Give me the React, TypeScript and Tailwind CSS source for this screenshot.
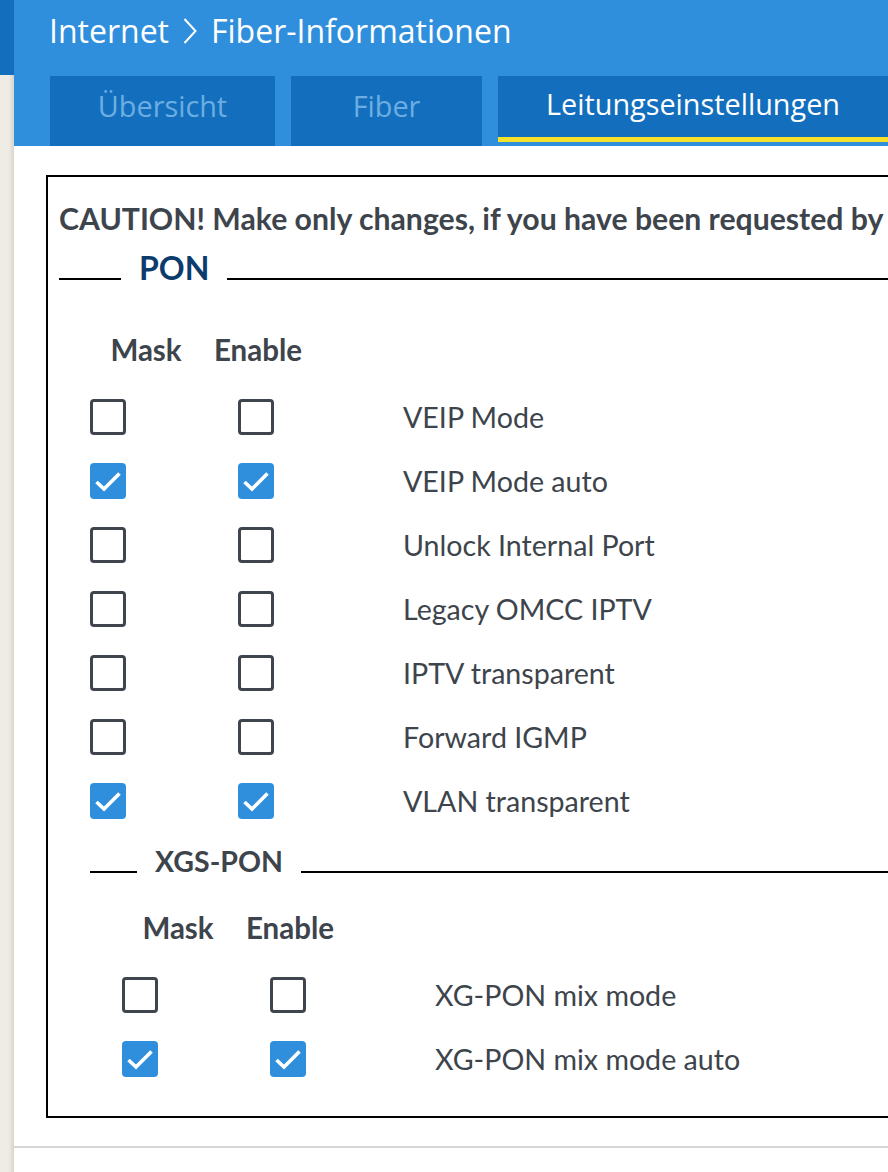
import React from "react";

type Opt = { label: string; mask: boolean; enable: boolean };

const ponOptions: Opt[] = [
  { label: "VEIP Mode", mask: false, enable: false },
  { label: "VEIP Mode auto", mask: true, enable: true },
  { label: "Unlock Internal Port", mask: false, enable: false },
  { label: "Legacy OMCC IPTV", mask: false, enable: false },
  { label: "IPTV transparent", mask: false, enable: false },
  { label: "Forward IGMP", mask: false, enable: false },
  { label: "VLAN transparent", mask: true, enable: true },
];

const xgsOptions: Opt[] = [
  { label: "XG-PON mix mode", mask: false, enable: false },
  { label: "XG-PON mix mode auto", mask: true, enable: true },
];

function Box({ checked }: { checked: boolean }) {
  if (checked) {
    return (
      <span className="flex h-[36px] w-[36px] shrink-0 items-center justify-center rounded-[4px] bg-[#2f8fdc]">
        <svg width="36" height="36" viewBox="0 0 36 36" fill="none">
          <polyline points="6.5,19 14,26 29.5,10.5" stroke="#fff" strokeWidth="3.6" />
        </svg>
      </span>
    );
  }
  return <span className="block h-[36px] w-[36px] shrink-0 rounded-[4px] border-[3px] border-[#3e454c] bg-white" />;
}

function Legend({ text, lead, className }: { text: string; lead: number; className: string }) {
  return (
    <div className="flex h-[32px] items-center">
      <div className="h-[2px] shrink-0 translate-y-[11px] bg-black" style={{ width: lead }} />
      <span className={`px-[18px] font-bold leading-none ${className}`}>{text}</span>
      <div className="h-[2px] flex-1 translate-y-[11px] bg-black" />
    </div>
  );
}

function Heads() {
  return (
    <div className="flex h-[64px] items-center text-[29.5px] font-bold text-[#3d444b]">
      <span className="ml-[48px] w-[100px] text-center">Mask</span>
      <span className="ml-[2px] w-[120px] text-center">Enable</span>
    </div>
  );
}

function Rows({ items }: { items: Opt[] }) {
  return (
    <div className="flex flex-col">
      {items.map((o) => (
        <div key={o.label} className="flex h-[64px] items-center">
          <span className="ml-[42px]">
            <Box checked={o.mask} />
          </span>
          <span className="ml-[112px]">
            <Box checked={o.enable} />
          </span>
          <span className="ml-[129px] whitespace-nowrap text-[28.6px] text-[#3d444b]">{o.label}</span>
        </div>
      ))}
    </div>
  );
}

export default function App() {
  return (
    <div className="flex h-[1172px] w-[888px] overflow-hidden bg-white font-['Lato',sans-serif]">
      <div className="flex w-[14px] shrink-0 flex-col">
        <div className="h-[75px] bg-[#136fbd]" />
        <div className="flex-1 bg-gradient-to-r from-[#efece6] from-60% to-[#d9d5cd]" />
      </div>

      <div className="flex min-w-0 flex-1 flex-col">
        <header className="flex h-[146px] flex-col bg-[#2f8fdc] font-['Open_Sans',sans-serif]">
          <div className="flex h-[76px] items-center pb-[14px] pl-[35px] text-[32px] text-white">
            <span>Internet</span>
            <svg className="mx-[14px]" width="14" height="26" viewBox="0 0 14 26" fill="none">
              <polyline points="1.5,1 12.5,13 1.5,25" stroke="#fff" strokeWidth="2" />
            </svg>
            <span>Fiber-Informationen</span>
          </div>
          <nav className="flex h-[70px] gap-[16px] pl-[36px] text-[28.8px]">
            <div className="flex w-[225px] items-center justify-center bg-[#136fbd] pb-[10px] text-[#6caee2]">Übersicht</div>
            <div className="flex w-[191px] items-center justify-center bg-[#136fbd] pb-[10px] text-[#6caee2]">Fiber</div>
            <div className="flex h-[66px] w-[390px] shrink-0 items-center justify-center border-b-[5px] border-[#f5e12a] bg-[#136fbd] pb-[5px] text-white">
              Leitungseinstellungen
            </div>
          </nav>
        </header>

        <main className="flex flex-1 flex-col pt-[29px]">
          <section className="ml-[32px] w-[900px] shrink-0 border-2 border-black pb-[25px]">
            <div className="flex h-[75px] items-center whitespace-nowrap pl-[11px] pt-[8px] text-[30.2px] font-bold text-[#3d444b]">
              CAUTION! Make only changes, if you have been requested by
            </div>
            <div className="pl-[11px]">
              <Legend text="PON" lead={62} className="text-[32px] text-[#0c3c6d]" />
            </div>
            <div className="mt-[34px]">
              <Heads />
            </div>
            <div className="mt-[3px]">
              <Rows items={ponOptions} />
            </div>
            <div className="ml-[32px] mt-[12px]">
              <div className="pl-[10px]">
                <Legend text="XGS-PON" lead={47} className="text-[28.5px] text-[#3d444b]" />
              </div>
              <div className="mt-[19px]">
                <Heads />
              </div>
              <div className="mt-[3px]">
                <Rows items={xgsOptions} />
              </div>
            </div>
          </section>
          <div className="mt-[28px] h-[2px] bg-[#d6d6d6]" />
        </main>
      </div>
    </div>
  );
}
